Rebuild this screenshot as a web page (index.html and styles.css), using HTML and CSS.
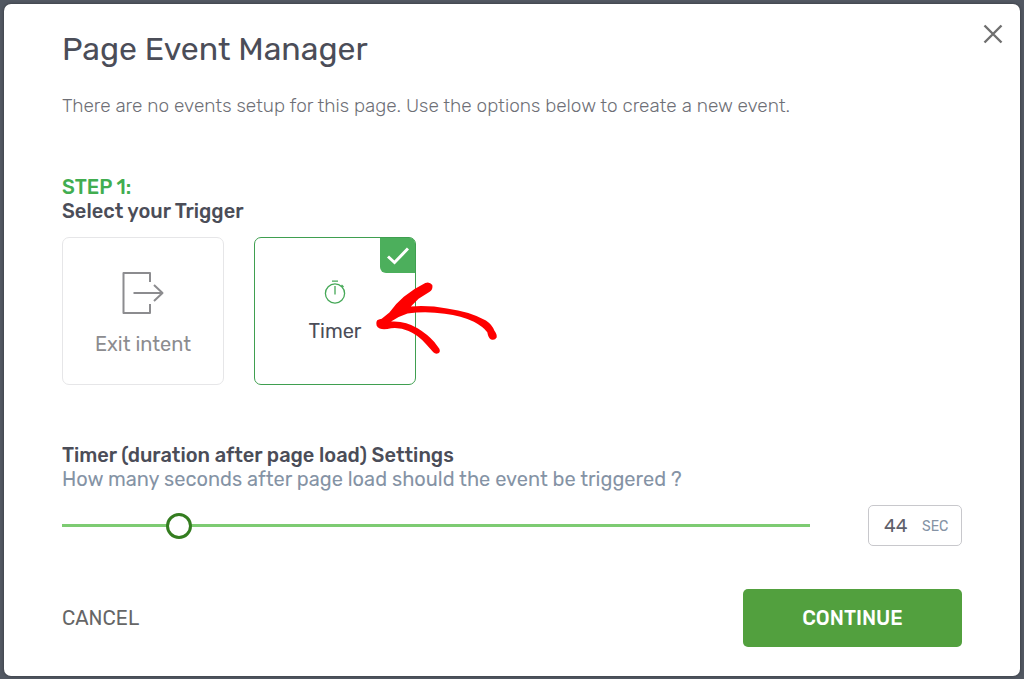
FILE: index.html
```html
<!DOCTYPE html>
<html lang="en">
  <head>
    <meta charset="UTF-8">
    <meta name="viewport" content="width=device-width, initial-scale=1.0">
    <title>Page Event Manager</title>
    <link rel="stylesheet" href="styles.css">
  </head>
  <body>
    <form class="modal" role="dialog" aria-labelledby="modal-title">
      <button type="button" class="modal-close" aria-label="Close">
        <svg width="20" height="20" viewBox="0 0 20 20">
          <path d="M1.5 1.5 18.5 18.5M18.5 1.5 1.5 18.5" fill="none" stroke="#6f6f6f" stroke-width="2.400"/>
        </svg>
      </button>

      <h1 id="modal-title">Page Event Manager</h1>
      <p class="intro">There are no events setup for this page. Use the options below to create a new event.</p>

      <p class="step">STEP 1:</p>
      <h2>Select your Trigger</h2>
      <div class="triggers">
        <label class="trigger">
          <input type="radio" name="trigger" value="exit">
          <svg class="exit-icon" width="42" height="42" viewBox="0 0 42 42">
            <g fill="none" stroke="#8c8c8f" stroke-width="2" stroke-linejoin="round">
              <path d="M28 10V1H1.500V41H28V32"/>
              <path d="M11.500 21H40M32 13 40.500 21 32 29"/>
            </g>
          </svg>
          <span>Exit intent</span>
        </label>
        <label class="trigger selected">
          <input type="radio" name="trigger" value="timer" checked>
          <span class="check">
            <svg width="22" height="18" viewBox="0 0 22 18">
              <path d="M1 9.500 7.500 15.500 21 1.500" fill="none" stroke="#fff" stroke-width="3"/>
            </svg>
          </span>
          <svg class="timer-icon" width="22" height="24" viewBox="0 0 22 24">
            <g fill="none" stroke="#45a857" stroke-width="1.300">
              <circle cx="11" cy="13.500" r="9.600"/>
              <path d="M8 1.200H14M11 6V14.500M17.500 5 19.500 7"/>
            </g>
          </svg>
          <span>Timer</span>
          <svg class="arrow" width="124" height="76" viewBox="390 165 370 225">
            <path fill="#fe0000" d="M395 287Q397 282 410 280L433 261Q451 235 476 214Q507 189 540 173Q553 168 561 179Q564 193 552 200L520 220L497 243Q551 239 605 249Q674 258 721 285Q740 298 746 315Q755 327 753 336Q747 346 735 341Q728 336 725 320Q713 304 685 289Q648 271 598 265Q543 256 487 264Q461 272 438 288Q480 285 517 308Q548 327 567 349L582 369Q586 378 579 383Q571 387 564 380L542 355Q519 328 490 316Q465 305 438 308Q417 313 404 309Q390 301 395 287Z"/>
          </svg>
        </label>
      </div>

      <h2><label for="seconds">Timer (duration after page load) Settings</label></h2>
      <p class="hint">How many seconds after page load should the event be triggered ?</p>
      <div class="timer-row">
        <input type="range" class="slider" id="seconds" min="1" max="300" value="44">
        <label class="seconds">
          <input type="text" id="seconds-value" value="44">
          <span>SEC</span>
        </label>
      </div>

      <div class="actions">
        <button type="button" class="cancel">CANCEL</button>
        <button type="submit" class="continue">CONTINUE</button>
      </div>
    </form>
    <script>
      var slider = document.getElementById("seconds");
      var box = document.getElementById("seconds-value");
      slider.addEventListener("input", function () {
        box.value = slider.value;
      });
      box.addEventListener("input", function () {
        slider.value = box.value;
      });
    </script>
  </body>
</html>
```
FILE: styles.css
```css
* {
  box-sizing: border-box;
}
body {
  margin: 0;
  padding: 4px 4px 3px;
  background-color: #525862;
  font-family: Rubik, Roboto, sans-serif;
  font-size: 20px;
  line-height: 24px;
  color: #4b4d58;
}
h1, h2, p {
  margin: 0;
}
button, input {
  font-family: inherit;
  font-size: inherit;
}
button {
  border: 0;
  background: none;
  cursor: pointer;
}
.modal {
  position: relative;
  padding: 26px 58px 29px;
  background-color: #fff;
  border-radius: 7px;
  box-shadow: 0 0 3px #30343b;
}
.modal-close {
  position: absolute;
  top: 20px;
  right: 17px;
  padding: 0;
  height: 20px;
  line-height: 0;
}
h1 {
  font-size: 32px;
  font-weight: 400;
  line-height: 38px;
}
h2 {
  font-size: 20px;
  font-weight: 500;
  line-height: 24px;
}
.intro {
  margin: 26px 0 57px;
  font-size: 19px;
  font-weight: 300;
  color: #6e6f76;
}
.step {
  font-weight: 500;
  color: #41ad50;
}
.triggers {
  display: flex;
  gap: 30px;
  margin: 14px 0 58px;
}
.trigger {
  position: relative;
  display: flex;
  flex-direction: column;
  align-items: center;
  justify-content: center;
  width: 162px;
  height: 148px;
  border: 1px solid #e6e6e8;
  border-radius: 7px;
  color: #8c8c8f;
  cursor: pointer;
}
.trigger input {
  position: absolute;
  opacity: 0;
}
.trigger.selected {
  border-color: #3f9f50;
  color: #4b4d58;
}
.exit-icon {
  margin: 6px 0 18px;
}
.timer-icon {
  margin-bottom: 15px;
}
.check {
  position: absolute;
  top: 0;
  right: 0;
  display: flex;
  align-items: center;
  justify-content: center;
  width: 35px;
  height: 35px;
  background-color: #4caf5c;
  border-radius: 0 5px 0 6px;
}
.arrow {
  position: absolute;
  top: 42px;
  left: 120px;
}
.hint {
  color: #8593a5;
}
.timer-row {
  display: flex;
  align-items: center;
  gap: 58px;
  margin: 14px 0 43px;
}
.slider {
  flex: 1;
  min-width: 0;
  height: 26px;
  margin: 0;
  appearance: none;
  background: linear-gradient(#7dcb72, #7dcb72) center / 100% 3px no-repeat;
}
.slider::-webkit-slider-thumb {
  appearance: none;
  width: 26px;
  height: 26px;
  background-color: #fff;
  border: 3px solid #347d20;
  border-radius: 50%;
}
.seconds {
  display: flex;
  align-items: center;
  width: 94px;
  height: 41px;
  padding-left: 15px;
  border: 1px solid #c8c8cc;
  border-radius: 5px;
}
.seconds input {
  width: 38px;
  padding: 0;
  border: 0;
  outline: 0;
  font-size: 19px;
  color: #5f616b;
}
.seconds span {
  padding-top: 3px;
  font-size: 14px;
  color: #8593a5;
}
.actions {
  display: flex;
  align-items: center;
  justify-content: space-between;
}
.cancel {
  padding: 0;
  color: #666;
}
.continue {
  width: 219px;
  height: 58px;
  border-radius: 5px;
  background-color: #52a03e;
  font-weight: 500;
  color: #fff;
}
```
